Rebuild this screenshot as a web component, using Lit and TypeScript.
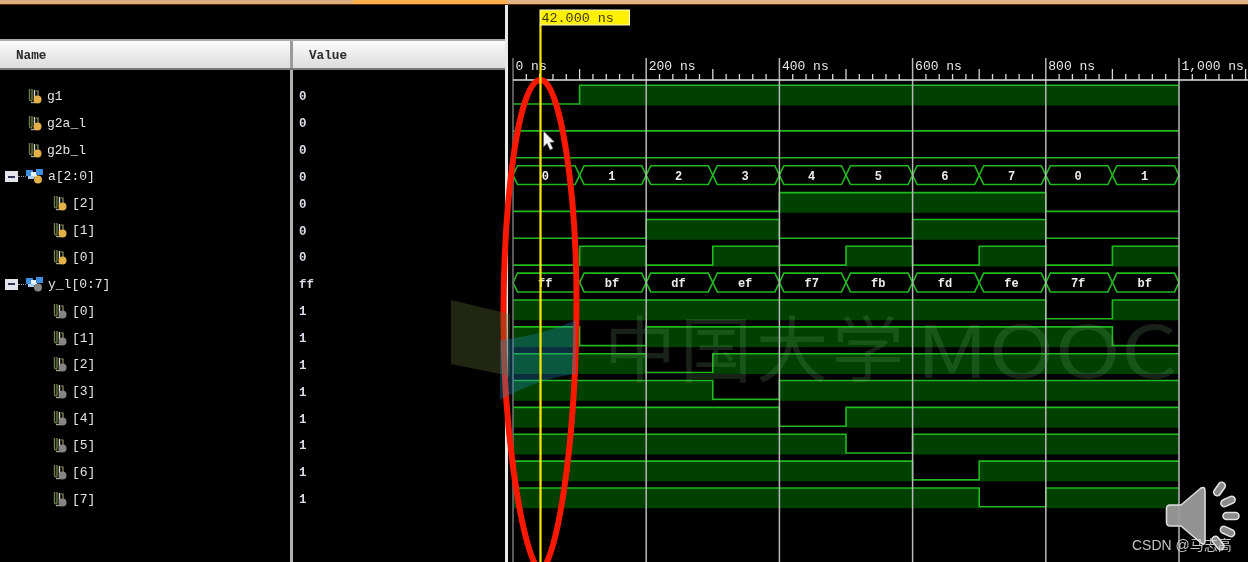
import { LitElement, html, css, svg } from "lit";
import { customElement } from "lit/decorators.js";

type Sig = { name: string; value: string; level: 0 | 1; kind: "pin" | "group" | "child"; out: boolean; wave?: number[]; bus?: string[] };

const lowAt = (n: number) => { const w = Array(10).fill(1); w[n] = 0; return w; };
const SIGS: Sig[] = [
  { name: "g1", value: "0", level: 0, kind: "pin", out: false, wave: [0,1,1,1,1,1,1,1,1,1] },
  { name: "g2a_l", value: "0", level: 0, kind: "pin", out: false, wave: Array(10).fill(0) },
  { name: "g2b_l", value: "0", level: 0, kind: "pin", out: false, wave: Array(10).fill(0) },
  { name: "a[2:0]", value: "0", level: 0, kind: "group", out: false, bus: ["0","1","2","3","4","5","6","7","0","1"] },
  { name: "[2]", value: "0", level: 1, kind: "child", out: false, wave: [0,0,0,0,1,1,1,1,0,0] },
  { name: "[1]", value: "0", level: 1, kind: "child", out: false, wave: [0,0,1,1,0,0,1,1,0,0] },
  { name: "[0]", value: "0", level: 1, kind: "child", out: false, wave: [0,1,0,1,0,1,0,1,0,1] },
  { name: "y_l[0:7]", value: "ff", level: 0, kind: "group", out: true, bus: ["ff","bf","df","ef","f7","fb","fd","fe","7f","bf"] },
  { name: "[0]", value: "1", level: 1, kind: "child", out: true, wave: [1,1,1,1,1,1,1,1,0,1] },
  { name: "[1]", value: "1", level: 1, kind: "child", out: true, wave: [1,0,1,1,1,1,1,1,1,0] },
  { name: "[2]", value: "1", level: 1, kind: "child", out: true, wave: lowAt(2) },
  { name: "[3]", value: "1", level: 1, kind: "child", out: true, wave: lowAt(3) },
  { name: "[4]", value: "1", level: 1, kind: "child", out: true, wave: lowAt(4) },
  { name: "[5]", value: "1", level: 1, kind: "child", out: true, wave: lowAt(5) },
  { name: "[6]", value: "1", level: 1, kind: "child", out: true, wave: lowAt(6) },
  { name: "[7]", value: "1", level: 1, kind: "child", out: true, wave: lowAt(7) },
];

const X0 = 513, SEG = 66.6, PITCH = 26.85, H = 18.8;
const xAt = (i: number) => X0 + i * SEG;
const loY = (r: number) => 104 + r * PITCH;

function wavePaths(w: number[], r: number) {
  const lo = loY(r), hi = lo - H;
  const y = (v: number) => (v ? hi : lo);
  let line = `M${X0} ${y(w[0])}`;
  w.forEach((v, i) => {
    if (i > 0 && v !== w[i - 1]) line += `L${xAt(i)} ${y(v)}`;
    line += `L${xAt(i + 1)} ${y(v)}`;
  });
  const fills: unknown[] = [];
  let start = -1;
  for (let i = 0; i <= w.length; i++) {
    const on = i < w.length && w[i] === 1;
    if (on && start < 0) start = i;
    if (!on && start >= 0) {
      fills.push(svg`<rect class="fill" x=${xAt(start)} y=${hi} width=${(i - start) * SEG} height=${H + 1.5}></rect>`);
      start = -1;
    }
  }
  return svg`${fills}<path class="wire" d=${line}></path>`;
}

function busPaths(b: string[], r: number) {
  const lo = loY(r), hi = lo - H, mid = (lo + hi) / 2, e = 4.5;
  return b.map((t, i) => {
    const a = xAt(i), c = xAt(i + 1);
    return svg`<path class="wire" d="M${a} ${mid}L${a + e} ${hi}L${c - e} ${hi}L${c} ${mid}L${c - e} ${lo}L${a + e} ${lo}Z"></path>
      <text class="buslabel" x=${a + SEG / 2 - 1} y=${mid + 4.5}>${t}</text>`;
  });
}

function ruler() {
  const items: unknown[] = [];
  for (let i = 0; i <= 55; i++) {
    const x = X0 + i * (SEG / 5);
    if (i % 10 === 0) continue;
    const top = i % 5 === 0 ? 69 : 74;
    items.push(svg`<line class="tick" x1=${x} x2=${x} y1=${top} y2="80"></line>`);
  }
  const labels = ["0 ns", "200 ns", "400 ns", "600 ns", "800 ns", "1,000 ns"];
  labels.forEach((l, i) => {
    const x = X0 + i * SEG * 2;
    items.push(svg`<text class="axis" x=${x + 2.5} y="69.500">${l}</text>`);
  });
  return items;
}

function grid() {
  return [0, 1, 2, 3, 4, 5].map((i) => {
    const x = X0 + i * SEG * 2;
    return svg`<line class=${i === 0 ? "grid0" : "grid"} x1=${x} x2=${x} y1="58" y2="562"></line>`;
  });
}

const pinIcon = (out: boolean) => html`<svg class="ic" viewBox="0 0 15 17">
  <path d="M2.500 1V11C2.500 13.500 5 13.500 5 11V1" fill="none" stroke="#6f8048" stroke-width="1.4"></path>
  <path d="M7.500 2V10" fill="none" stroke="#d8d8c8" stroke-width="1.4"></path>
  <path d="M9 3H11V8" fill="none" stroke="#8c9464" stroke-width="1.2"></path>
  <path d="M4 14.500H9" stroke="#a8a898" stroke-width="1.4"></path>
  <circle cx="10.500" cy="11.500" r="4" fill=${out ? "#858585" : "#e3b04a"}></circle>
</svg>`;

const groupIcon = (out: boolean) => html`<svg class="ic group" viewBox="0 0 17 15">
  <rect x="0" y="1" width="7" height="6" fill="#3f8fe0"></rect>
  <rect x="5" y="3" width="6" height="5" fill="#e8f2fb"></rect>
  <rect x="10" y="0" width="7" height="6" fill="#3f8fe0"></rect>
  <rect x="2" y="7" width="6" height="3" fill="#a8cdf0"></rect>
  <circle cx="12" cy="10.500" r="4" fill=${out ? "#858585" : "#e3b04a"}></circle>
</svg>`;

@customElement("app-root")
export class AppRoot extends LitElement {
  static styles = css`
    :host { display: block; width: 1248px; height: 562px; overflow: hidden; background: #000; }
    .stage { position: relative; width: 1248px; height: 562px; display: flex; flex-direction: column; filter: blur(0.5px); background: #000; }
    .strip { height: 4px; flex: none; display: flex; border-bottom: 1px solid #5a2c08; }
    .tab { background: #dcae80; }
    .tab.a { width: 110px; } .tab.b { width: 109px; } .tab.c { width: 134px; }
    .tab.on { width: 154px; background: #ffb04e; }
    .tab.rest { flex: 1; background: #e2b488; }
    .main { flex: 1; display: flex; min-height: 0; }
    .left { width: 505px; flex: none; display: flex; flex-direction: column; font-family: "Liberation Mono", monospace; }
    .sep { width: 3px; flex: none; background: #e8e8e8; }
    .spacer { height: 34px; flex: none; }
    .head { height: 31px; flex: none; display: flex; box-sizing: border-box; border-top: 2px solid #aaa; border-bottom: 2px solid #777; background: linear-gradient(#fbfbfb, #dcdcdc); color: #2a2a2a; font-size: 12.7px; font-weight: 700; align-items: center; }
    .hname { width: 293px; box-sizing: border-box; padding: 2px 0 0 16px; border-right: 3px solid #9a9a9a; height: 100%; display: flex; align-items: center; }
    .hvalue { padding: 2px 0 0 16px; }
    .body { flex: 1; display: flex; min-height: 0; }
    .names { width: 293px; flex: none; box-sizing: border-box; border-right: 3px solid #b0b0b0; padding-top: 13px; }
    .values { flex: 1; padding-top: 13px; padding-left: 6px; }
    .row { height: 26.85px; display: flex; align-items: center; color: #e4e4e4; font-size: 13px; white-space: nowrap; }
    .values .row { font-size: 12.5px; font-weight: 700; color: #dcdce8; padding-top: 2px; box-sizing: border-box; }
    .names .row { padding-left: 27px; }
    .names .row.child { padding-left: 52px; }
    .names .row.hasbox { padding-left: 5px; }
    .box { width: 13px; height: 11px; background: #e4e4ec; display: flex; align-items: center; justify-content: center; flex: none; }
    .box i { display: block; width: 7px; height: 2px; background: #335; }
    .dots { width: 8px; border-top: 1px dotted #889; flex: none; }
    .ic { width: 15px; height: 17px; flex: none; margin-right: 5px; }
    .ic.group { width: 17px; height: 15px; margin-right: 5px; }
    .wave { width: 740px; height: 557px; flex: none; display: block; }
    .fill { fill: #004000; }
    .wire { fill: none; stroke: #22b822; stroke-width: 1.6; }
    .tick { stroke: #d8d8d8; stroke-width: 1.3; }
    .base { stroke: #e4e4e4; stroke-width: 1.6; }
    .grid { stroke: #b8b8b8; stroke-width: 1.5; }
    .grid0 { stroke: #777; stroke-width: 1.5; }
    .axis { fill: #e8e8e8; font: 13px "Liberation Mono", monospace; }
    .buslabel { fill: #eee; font: 700 12px "Liberation Mono", monospace; text-anchor: middle; }
    .over { position: absolute; left: 0; top: 0; width: 1248px; height: 562px; pointer-events: none; }
    .oval { fill: none; stroke: #fa1800; stroke-width: 6; }
    .cur { stroke: #ffe800; stroke-width: 2.2; }
    .flag { fill: #fff000; stroke: #fffbc0; stroke-width: 1; }
    .flagt { fill: #3a3a10; font: 13.4px "Liberation Mono", monospace; }
    .mark { fill: rgb(120, 170, 120); fill-opacity: 0.2; font-family: "Noto Sans CJK SC", "Noto Sans", sans-serif; font-weight: 400; font-size: 72px; }
    .fl1 { fill: #5a6a30; fill-opacity: 0.36; }
    .fl2 { fill: #2090c0; fill-opacity: 0.32; }
    .arrow { fill: #f4f4f4; stroke: #555; stroke-width: 0.6; }
    .sp { fill: #9a9a9a; stroke: #dcdcdc; stroke-width: 1.6; stroke-linejoin: round; fill-opacity: 0.95; }
    .ray { fill: #8a8a8a; stroke: #e2e2e2; stroke-width: 1.6; }
    .csdn { fill: #d8d8d8; fill-opacity: 0.9; font: 14px "Liberation Sans", "Noto Sans CJK SC", sans-serif; }
  `;

  render() {
    return html`<div class="stage">
      <div class="strip">
        <div class="tab a"></div><div class="tab b"></div><div class="tab c"></div><div class="tab on"></div><div class="tab rest"></div>
      </div>
      <div class="main">
        <div class="left">
          <div class="spacer"></div>
          <div class="head"><div class="hname">Name</div><div class="hvalue">Value</div></div>
          <div class="body">
            <div class="names">
              ${SIGS.map((s) => html`<div class="row ${s.kind === "child" ? "child" : ""} ${s.kind === "group" ? "hasbox" : ""}">
                ${s.kind === "group"
                  ? html`<span class="box"><i></i></span><span class="dots"></span>${groupIcon(s.out)}`
                  : pinIcon(s.out)}
                <span>${s.name}</span>
              </div>`)}
            </div>
            <div class="values">
              ${SIGS.map((s) => html`<div class="row">${s.value}</div>`)}
            </div>
          </div>
        </div>
        <div class="sep"></div>
        <svg class="wave" viewBox="508 5 740 557">
          ${SIGS.map((s, r) => (s.bus ? busPaths(s.bus, r) : wavePaths(s.wave!, r)))}
          ${grid()}
          <line class="base" x1=${X0} x2="1248" y1="80" y2="80"></line>
          ${ruler()}
        </svg>
      </div>
      <svg class="over" viewBox="0 0 1248 562">
        <path class="oval" d="M540.500 80C519 80 503.500 195 503.500 320C503.500 430 520 530 534 562C536 568 545 568 547 562C561 530 576.500 430 576.500 300C576.500 190 560 80 540.500 80Z"></path>
        <polygon class="fl1" points="451,300 510,314 510,376 451,364"></polygon>
        <path class="fl2" d="M500 340Q540 336 576 320V374Q540 378 500 400Z"></path>
        <text class="mark" x="604" y="376" letter-spacing="4">中国大学</text>
        <text class="mark" x="916" y="378" textLength="262" lengthAdjust="spacingAndGlyphs">MOOC</text>
        <line class="cur" x1="540.500" x2="540.500" y1="25" y2="562"></line>
        <rect class="flag" x="540" y="10" width="89.500" height="15"></rect>
        <text class="flagt" x="541.500" y="22">42.000 ns</text>
        <path class="arrow" d="M543.500 131V147L547 143.500L550 150L553 148.500L550 142.500L554.500 142Z"></path>
        <path class="sp" d="M1170 505H1181L1201 488Q1205 486 1205 491V541Q1205 546 1201 543L1181 526H1170Q1166.500 526 1166.500 522V509Q1166.500 505 1170 505Z"></path>
        <rect class="ray" x="-7.500" y="-3.500" width="15" height="7" rx="3.500" transform="translate(1219.500 489) rotate(-55)"></rect>
        <rect class="ray" x="-7.500" y="-3.500" width="15" height="7" rx="3.500" transform="translate(1228 501.500) rotate(-25)"></rect>
        <rect class="ray" x="-8" y="-3.500" width="16" height="7" rx="3.500" transform="translate(1231 516)"></rect>
        <rect class="ray" x="-7.500" y="-3.500" width="15" height="7" rx="3.500" transform="translate(1227.500 531.500) rotate(25)"></rect>
        <rect class="ray" x="-7.500" y="-3.500" width="15" height="7" rx="3.500" transform="translate(1218 543) rotate(52)"></rect>
        <text class="csdn" x="1132" y="550">CSDN @马志高</text>
      </svg>
    </div>`;
  }
}
